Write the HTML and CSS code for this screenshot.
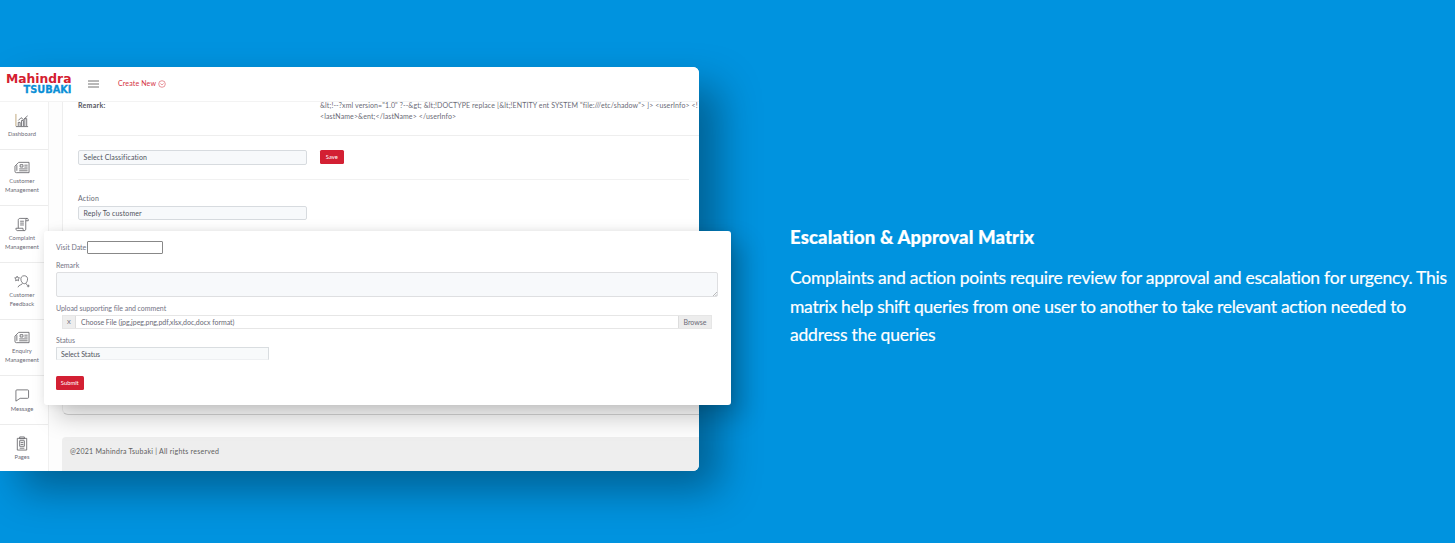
FILE: index.html
```
<!DOCTYPE html>
<html lang="en">
<head>
<meta charset="utf-8">
<title>Escalation &amp; Approval Matrix</title>
<link rel="stylesheet" href="styles.css">
</head>
<body>
<section class="feature">
  <div class="preview">
    <div class="app">
      <header class="topbar">
        <svg class="logo" viewBox="0 0 68 26" role="img" aria-label="Mahindra Tsubaki">
          <text class="logo-top" x="0" y="12.300" textLength="65.500" lengthAdjust="spacingAndGlyphs">Mahindra</text>
          <text class="logo-bottom" x="17.500" y="22.300" textLength="48" lengthAdjust="spacingAndGlyphs">TSUBAKI</text>
        </svg>
        <svg class="burger" viewBox="0 0 11 8"><path d="M0 1h11M0 4h11M0 7h11"/></svg>
        <span class="create">Create New</span>
        <svg class="create-icon" viewBox="0 0 8 8"><circle cx="4" cy="4" r="3.300"/><path d="M2.400 3.500 4 4.900l1.600-1.400"/></svg>
      </header>
      <div class="body">
        <nav class="side">
          <a class="item short first"><svg viewBox="0 0 16 16"><path class="tan" d="M1.500 1v13"/><path d="M1.500 14.500h13M4 14v-4h2v4M7.500 14V8h2v6M11 14V6h2v8M4 8l3-3 2.500 2L14 3"/></svg><span>Dashboard</span></a>
          <a class="item"><svg viewBox="0 0 16 16"><path d="M4.500 2.500h11v11H2A1.500 1.500 0 0 1 .5 12V6.500l4-4zM2.500 5.500v6M6 5h3v2.500H6zM10.500 5.500H14M10.500 7.500H14M5 9.500h9M5 11.500h9"/></svg><span>Customer<br>Management</span></a>
          <a class="item"><svg viewBox="0 0 16 16"><path d="M4 12V3.500C4 2 5 1.500 6 1.500h7.500c-1.200 0-1.500 1-1.500 2V13c0 1-.6 1.500-1.500 1.500H3c-1 0-1.500-1-1.500-2.500H9c0 1.500.5 2.500 1.500 2.500M13.500 1.500c1 0 1.200.8 1.200 2.500H12M6 4.500h4M6 6.500h4M6 8.500h4"/></svg><span>Complaint<br>Management</span></a>
          <a class="item"><svg viewBox="0 0 18 16"><path d="m3.500 2 .8 1.700 1.900.3-1.400 1.300.3 1.900-1.600-.9-1.700.9.400-1.900L.8 4l1.900-.3zM8 7c-1-3 .5-5.500 3.500-5.500S16 4 15 7c-.5 2-1.800 3.500-3.300 3.500S8.600 9 8 7zM9.500 10c0 2-4.500 1.500-5 4.500M13.500 10c0 1.500 1 1.500 1.500 2M16 11.500v3M14.500 13h3"/></svg><span>Customer<br>Feedback</span></a>
          <a class="item"><svg viewBox="0 0 16 16"><path d="M4.500 2.500h11v11H2A1.500 1.500 0 0 1 .5 12V6.500l4-4zM2.500 5.500v6M6 5h3v2.500H6zM10.500 5.500H14M10.500 7.500H14M5 9.500h9M5 11.500h9"/></svg><span>Enquiry<br>Management</span></a>
          <a class="item short"><svg viewBox="0 0 16 16"><path d="M2.500 2h11.500a1 1 0 0 1 1 1v7a1 1 0 0 1-1 1H6l-4.500 3V3a1 1 0 0 1 1-1z"/></svg><span>Message</span></a>
          <a class="item short last"><svg viewBox="0 0 16 16"><path d="M3 2.500h10v12.500H3zM5.500 1h5v2h-5zM5.500 5h5v6h-5zM6.500 7h3M6.500 9h3M5.500 13h5"/></svg><span>Pages</span></a>
        </nav>
        <main class="main">
          <div class="card">
            <div class="remark-row">
              <b class="remark-name">Remark:</b>
              <p class="xml">&amp;lt;!--?xml version="1.0" ?--&amp;gt; &amp;lt;!DOCTYPE replace [&amp;lt;!ENTITY ent SYSTEM "file:///etc/shadow"&gt; ]&gt; &lt;userInfo&gt; &lt;!<br>&lt;lastName&gt;&amp;ent;&lt;/lastName&gt; &lt;/userInfo&gt;</p>
            </div>
            <div class="class-row">
              <div class="select">Select Classification</div>
              <button class="btn save">Save</button>
            </div>
            <div class="action">
              <label>Action</label>
              <div class="select">Reply To customer</div>
            </div>
          </div>
          <footer class="foot">@2021 Mahindra Tsubaki | All rights reserved</footer>
        </main>
      </div>
    </div>
    <form class="dialog">
      <div class="date-row"><label>Visit Date</label><span class="date"></span></div>
      <label class="remark-label">Remark</label>
      <div class="area"><svg viewBox="0 0 5 5"><path d="M0 5 5 0M3 5l2-2"/></svg></div>
      <label class="upload-label">Upload supporting file and comment</label>
      <div class="file"><span class="file-x">X</span><span class="file-name">Choose File (jpg,jpeg,png,pdf,xlsx,doc,docx format)</span><span class="browse">Browse</span></div>
      <label class="status-label">Status</label>
      <div class="status">Select Status</div>
      <button class="btn submit" type="button">Submit</button>
    </form>
  </div>
  <div class="copy">
    <h2>Escalation &amp; Approval Matrix</h2>
    <p class="l1">Complaints and action points require review for approval and escalation for urgency. This</p>
    <p class="l2">matrix help shift queries from one user to another to take relevant action needed to</p>
    <p class="l3">address the queries</p>
  </div>
</section>
</body>
</html>
```
FILE: styles.css
```
* { box-sizing: border-box; }
body { margin: 0; background: #0093df; }
h2, p { margin: 0; }
.feature { display: flex; height: 543px; overflow: hidden; background: #0093df; }
.preview { position: relative; width: 790px; flex: none; padding-top: 67px; font: 7px/11px Lato, sans-serif; color: #6a6a76; }
.preview::before { content: ""; position: absolute; left: 0; top: 67px; width: 699px; height: 403px; border-radius: 6px; box-shadow: 20px 20px 40px rgba(0, 0, 0, .34); }
.app { position: relative; width: 699px; height: 403.5px; overflow: hidden; background: #fdfdfd; border-radius: 0 6px 6px 0; display: flex; flex-direction: column; }
.topbar { height: 34.500px; flex: none; background: #fff; border-bottom: 1px solid #f3f3f3; display: flex; align-items: center; padding-left: 6px; }
.logo { width: 68px; height: 26px; }
.logo-top, .logo-bottom { font-family: "DejaVu Sans", sans-serif; font-weight: bold; }
.logo-top { font-size: 12.5px; fill: #d4202f; }
.logo-bottom { font-size: 10.8px; fill: #0b8fd6; stroke: #0b8fd6; stroke-width: .3px; }
.burger { width: 11px; height: 8px; margin-left: 14px; fill: none; stroke: #737373; }
.create { margin-left: 19px; color: #d4303f; font-size: 7px; letter-spacing: .15px; }
.create-icon { width: 8px; height: 8px; margin-left: 2px; fill: none; stroke: #dd6570; stroke-width: .7; }
.body { display: flex; flex: 1; min-height: 0; }
.side { width: 49px; flex: none; background: #fff; border-right: 1px solid #f0f0f0; }
.item { height: 56.700px; padding-right: 4px; border-bottom: 1px solid #ececec; display: flex; flex-direction: column; align-items: center; justify-content: center; text-align: center; font-size: 5.8px; line-height: 9px; letter-spacing: .05px; }
.item svg { width: 16px; height: 15px; fill: none; stroke: #656569; stroke-width: .9; margin-bottom: 1px; }
.item .tan { stroke: #b79a68; }
.short { height: 49px; }
.first { height: 48px; }
.last { border: 0; height: 46px; }
.main { flex: 1; min-width: 0; padding-left: 13px; display: flex; flex-direction: column; }
.card { height: 313px; flex: none; background: #fff; border-left: 1px solid #eee; border-bottom: 1px solid #d5d5d5; border-radius: 0 0 0 6px; padding-left: 15px; overflow: hidden; }
.remark-row { display: flex; height: 34.500px; border-bottom: 1px solid #eee; }
.remark-name { width: 242px; flex: none; line-height: 7px; letter-spacing: .3px; color: #555561; }
.xml { line-height: 11px; margin-top: -1.500px; white-space: nowrap; letter-spacing: .11px; }
.class-row { display: flex; width: 611px; height: 43.500px; padding-top: 14px; border-bottom: 1px solid #f1f1f1; }
.select { width: 229px; height: 15px; border: 1px solid #d7dbdf; border-radius: 2px; background: #f7f9fb; padding-left: 4.500px; line-height: 13px; color: #50535b; letter-spacing: .12px; }
.btn { border: 0; border-radius: 1.500px; padding: 0; background: #d32033; color: #fff; font: 5.8px Lato, sans-serif; text-align: center; }
.save { width: 23.500px; height: 14px; margin-left: 13px; padding-bottom: 1px; }
.action { padding-top: 13px; }
.action label { display: block; height: 13px; letter-spacing: .15px; }
.action .select { height: 14px; }
.foot { height: 34px; margin-top: auto; background: #eee; border-radius: 4px 0 0 0; padding: 9.500px 0 0 8px; letter-spacing: .25px; color: #606060; }
.dialog { position: absolute; left: 44px; top: 231px; width: 687px; height: 174px; padding: 10px 13px 0 12px; background: #fff; border-radius: 3px; box-shadow: 0 0 8px rgba(0, 0, 0, .08), 12px 12px 24px rgba(0, 0, 0, .22); }
.dialog label { display: block; color: #747485; }
.date-row { display: flex; height: 19px; line-height: 13px; }
.date-row label { width: 31px; }
.date { width: 76px; height: 13px; border: 1px solid #888; border-radius: 1px; }
.remark-label { height: 12px; line-height: 10px; }
.area { height: 25px; border: 1px solid #dedfe1; border-radius: 2px; background: #f7f9fb; display: flex; align-items: flex-end; justify-content: flex-end; }
.area svg { width: 4px; height: 4px; stroke: #888; stroke-width: .7; }
.upload-label { height: 18px; line-height: 23px; letter-spacing: -.05px; }
.file { display: flex; width: 650px; height: 14px; margin-left: 6px; border: 1px solid #e6e6e6; line-height: 13px; }
.file-x { width: 13px; line-height: 11px; text-align: center; background: #eee; border-right: 1px solid #ddd; font-size: 5.800px; }
.file-name { flex: 1; padding-left: 5px; letter-spacing: -.03px; }
.browse { width: 33px; text-align: center; background: #ededed; border-left: 1px solid #ddd; }
.status-label { height: 18px; line-height: 22px; }
.status { width: 212.500px; height: 13px; border: 1px solid #d9dde0; border-bottom-color: #eef0f2; background: #f8fafb; padding-left: 4px; line-height: 13px; color: #50535b; letter-spacing: -.03px; }
.submit { display: block; width: 27.500px; height: 13.500px; margin-top: 16px; }
.copy { flex: 1; padding-top: 222.500px; font: 17.5px/28.5px Lato, sans-serif; font-variant-ligatures: none; color: #fff; white-space: nowrap; -webkit-text-stroke: .2px #fff; }
.copy h2 { font-size: 18.5px; font-weight: 900; line-height: 28px; margin-bottom: 13.500px; letter-spacing: .13px; }
.l1 { letter-spacing: -.24px; }
.l2 { letter-spacing: -.275px; }
.l3 { letter-spacing: -.2px; }
```
